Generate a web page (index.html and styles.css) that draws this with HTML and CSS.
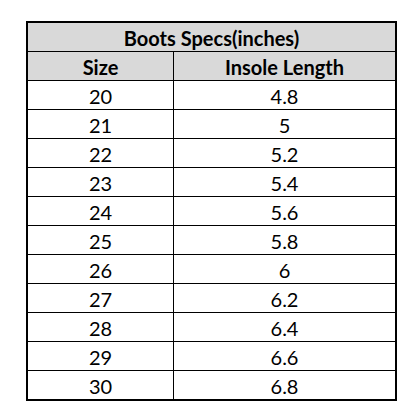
FILE: index.html
```html
<!DOCTYPE html>
<html>
<head>
<meta charset="utf-8">
<link rel="stylesheet" href="styles.css">
</head>
<body>
<table class="specs">
  <thead>
    <tr><th class="title" colspan="2">Boots Specs(inches)</th></tr>
    <tr><th class="c1">Size</th><th class="c2">Insole Length</th></tr>
  </thead>
  <tbody>
    <tr><td>20</td><td>4.8</td></tr>
    <tr><td>21</td><td>5</td></tr>
    <tr><td>22</td><td>5.2</td></tr>
    <tr><td>23</td><td>5.4</td></tr>
    <tr><td>24</td><td>5.6</td></tr>
    <tr><td>25</td><td>5.8</td></tr>
    <tr><td>26</td><td>6</td></tr>
    <tr><td>27</td><td>6.2</td></tr>
    <tr><td>28</td><td>6.4</td></tr>
    <tr><td>29</td><td>6.6</td></tr>
    <tr><td>30</td><td>6.8</td></tr>
  </tbody>
</table>
</body>
</html>
```
FILE: styles.css
```css
html, body {
  margin: 0;
  padding: 0;
  background: #fff;
}
body {
  padding: 21px 0 0 26px;
  font-family: Lato, "Open Sans", sans-serif;
  color: #000;
}
.specs {
  border-collapse: collapse;
  border: 2.5px solid #000;
  width: 371px;
}
.specs th, .specs td {
  border: 1px solid #000;
  height: 26px;
  padding: 2px 0 0 0;
  text-align: center;
  font-size: 20px;
  line-height: 20px;
}
.specs th {
  background: #d9d9d9;
  font-weight: 700;
}
.specs td {
  font-weight: 400;
}
.c1 { width: 145px; }
```
